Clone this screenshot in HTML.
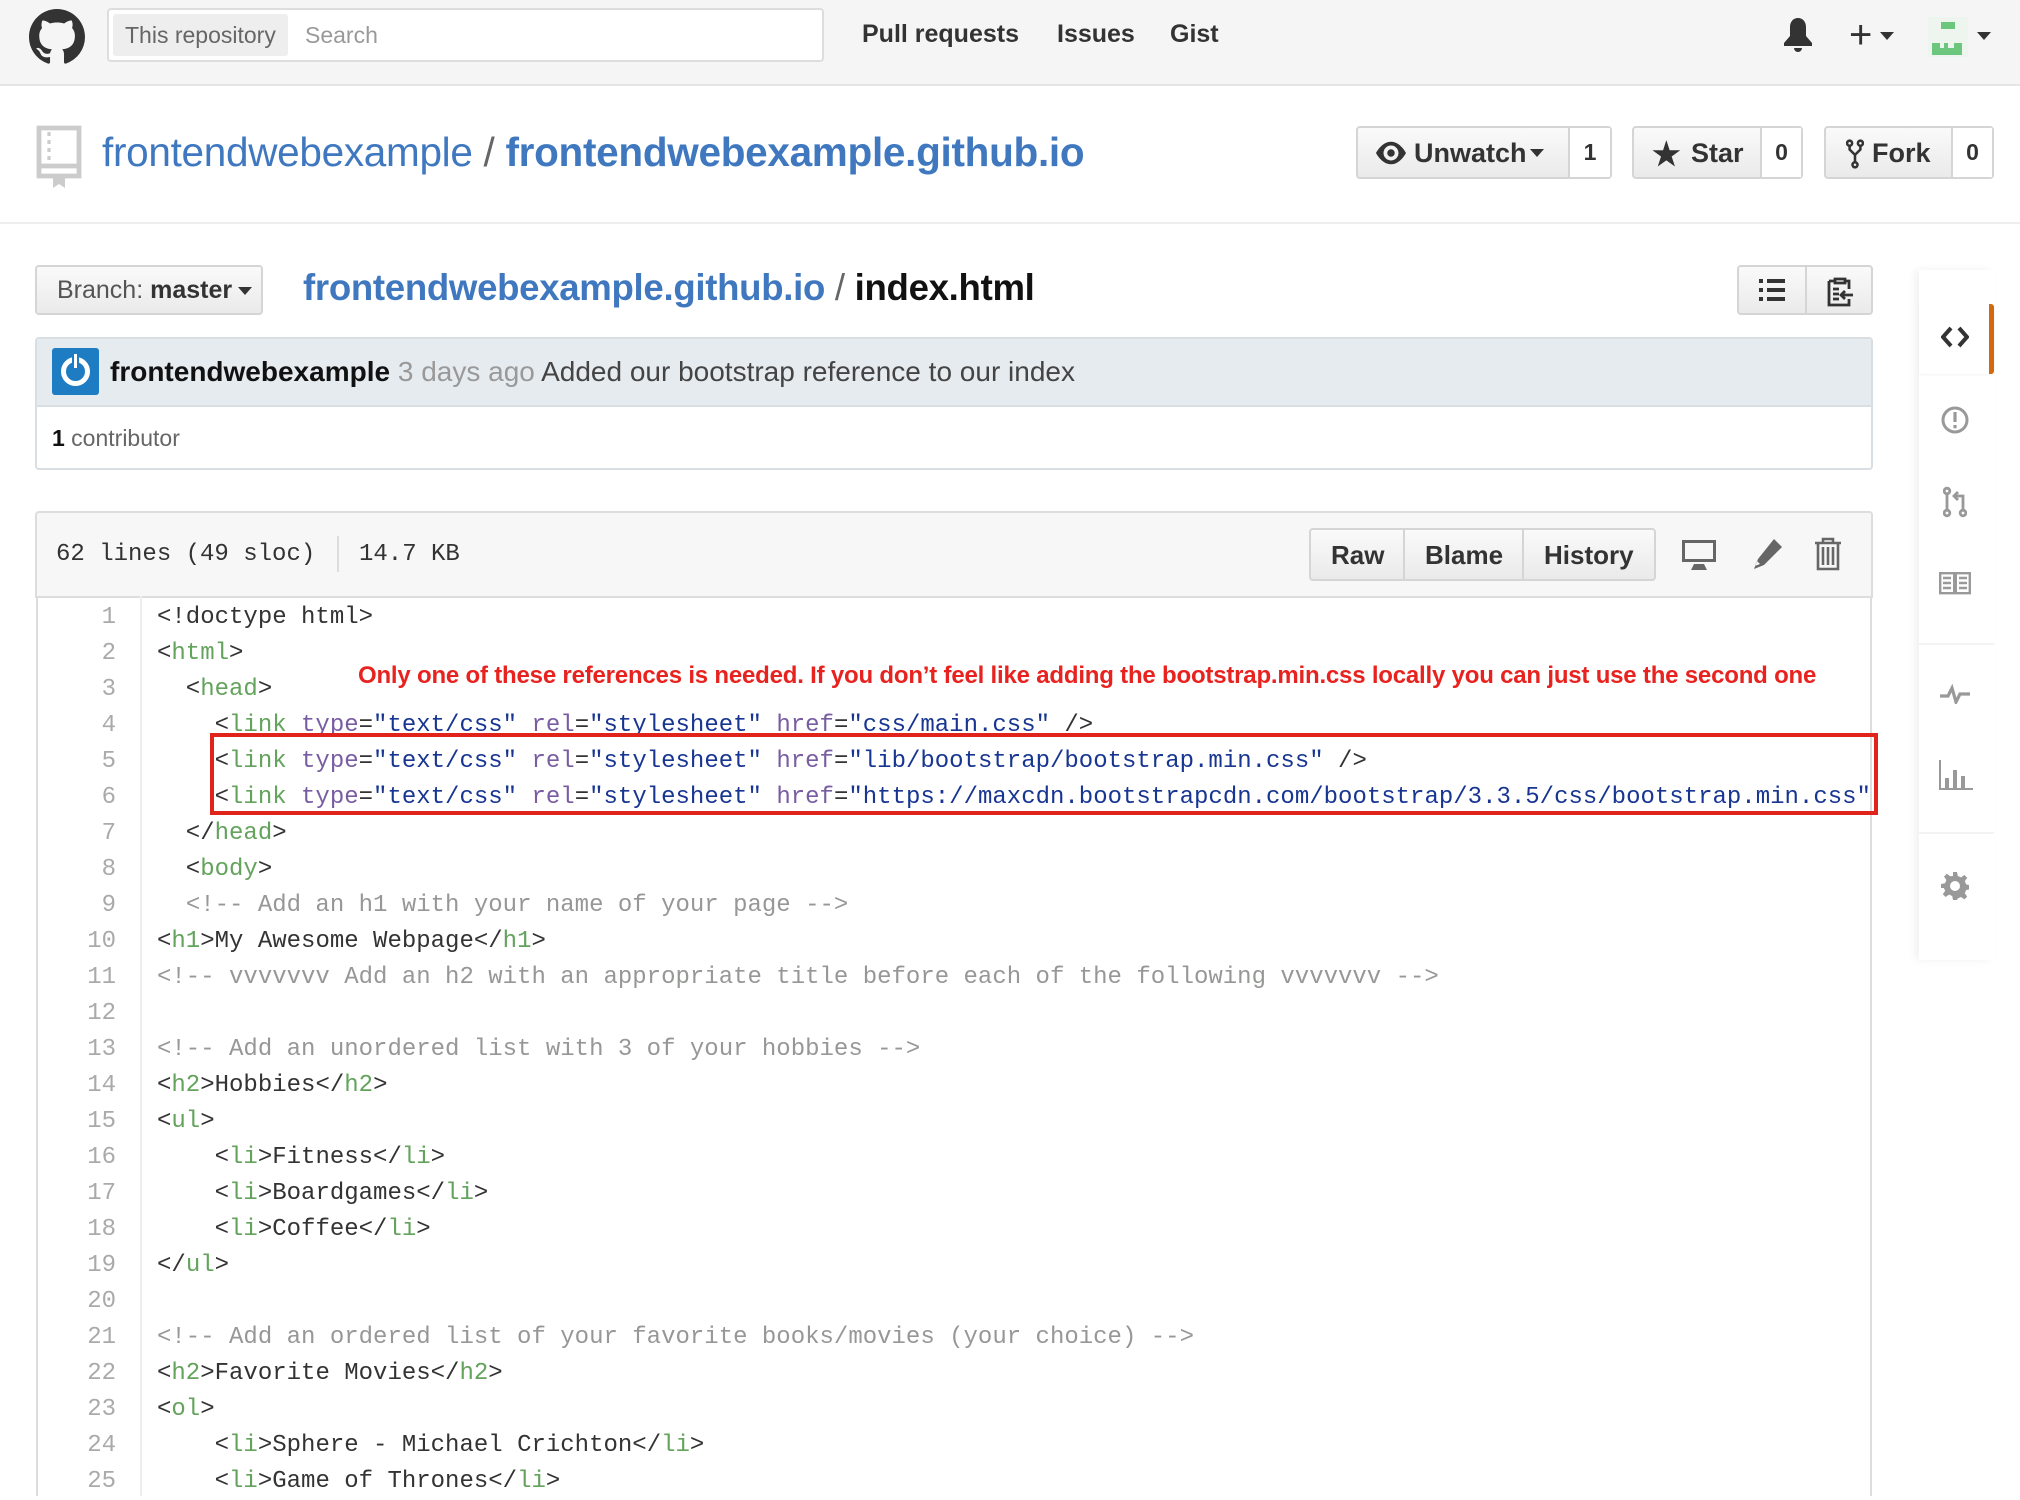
<!DOCTYPE html>
<html><head><meta charset="utf-8">
<style>
*{box-sizing:border-box;margin:0;padding:0}
body{width:2020px;height:1480px;overflow:hidden;background:#fff;font-family:"Liberation Sans",Arial,sans-serif;position:relative;color:#333}
.abs{position:absolute}
.hdr{left:0;top:0;width:2020px;height:86px;background:#f5f5f5;border-bottom:2px solid #e5e5e5}
.search{left:107px;top:8px;width:717px;height:54px;border:2px solid #ddd;border-radius:4px;background:#fff}
.scope{left:4px;top:4px;width:175px;height:42px;background:#eee;border-radius:3px;color:#666;font-size:23px;line-height:42px;padding-left:12px}
.nav{font-size:25px;font-weight:bold;color:#333;top:20px}
.btn{border:2px solid #d5d5d5;border-radius:4px;background:linear-gradient(#fafafa,#eaeaea);font-weight:bold;color:#333}
.cnt{background:#fff;border-left:2px solid #d5d5d5}
.blue{color:#4078c0}
.code{left:36px;top:596px;width:1836px;height:900px;border-left:2px solid #ddd;border-right:2px solid #ddd}
.ln{position:absolute;left:16px;width:100px;text-align:right;font-family:"Liberation Mono",monospace;font-size:24px;color:#aaa;line-height:36px}
.cl{position:absolute;left:157px;font-family:"Liberation Mono",monospace;font-size:24px;color:#333;white-space:pre;line-height:36px}
.t{color:#63a35c}.a{color:#795da3}.s{color:#183691}.c{color:#969896}
.side{left:1919px;top:270px;width:75px;height:690px;background:#fff;box-shadow:-4px 0 8px rgba(0,0,0,0.06)}
</style></head><body>
<div class="abs hdr"></div>
<svg class="abs" style="left:28px;top:9px" width="58" height="56" viewBox="0 0 16 16"><path fill="#333" d="M8 0C3.58 0 0 3.58 0 8c0 3.54 2.29 6.53 5.47 7.59.4.07.55-.17.55-.38 0-.19-.01-.82-.01-1.49-2.01.37-2.53-.49-2.69-.94-.09-.23-.48-.94-.82-1.13-.28-.15-.68-.52-.01-.53.63-.01 1.08.58 1.23.82.72 1.21 1.87.87 2.33.66.07-.52.28-.87.51-1.07-1.78-.2-3.64-.89-3.64-3.95 0-.87.31-1.59.82-2.15-.08-.2-.36-1.02.08-2.12 0 0 .67-.21 2.2.82.64-.18 1.32-.27 2-.27.68 0 1.36.09 2 .27 1.53-1.04 2.2-.82 2.2-.82.44 1.1.16 1.92.08 2.12.51.56.82 1.27.82 2.15 0 3.07-1.87 3.75-3.65 3.95.29.25.54.73.54 1.48 0 1.07-.01 1.93-.01 2.2 0 .21.15.46.55.38A8.013 8.013 0 0016 8c0-4.42-3.58-8-8-8z"/></svg>
<div class="abs search"><div class="abs scope">This repository</div><div class="abs" style="left:196px;top:4px;line-height:42px;font-size:23px;color:#999">Search</div></div>
<div class="abs nav" style="left:862px">Pull requests</div>
<div class="abs nav" style="left:1057px">Issues</div>
<div class="abs nav" style="left:1170px">Gist</div>
<svg class="abs" style="left:1784px;top:18px" width="28" height="34" viewBox="0 0 14 17"><path fill="#333" d="M7 0C4.5 0 3 2 3 4.5V9L0 12.5V14h14v-1.5L11 9V4.5C11 2 9.5 0 7 0zM5 15h4a2 2 0 01-4 0z"/></svg>
<div class="abs" style="left:1849px;top:10px;font-size:40px;color:#333;line-height:50px">+</div>
<div class="abs" style="left:1880px;top:32px;border:7px solid transparent;border-top:8px solid #333"></div>
<div class="abs" style="left:1928px;top:17px;width:40px;height:40px;background:#eef4ee"></div>
<div class="abs" style="left:1941px;top:22px;width:14px;height:7px;background:#6cc67e"></div>
<div class="abs" style="left:1932px;top:43px;width:30px;height:12px;background:#6cc67e"></div>
<div class="abs" style="left:1940px;top:43px;width:4px;height:5px;background:#eef4ee"></div>
<div class="abs" style="left:1948px;top:36px;width:6px;height:12px;background:#eef4ee"></div>
<div class="abs" style="left:1977px;top:32px;border:7px solid transparent;border-top:8px solid #333"></div>

<div class="abs" style="left:0;top:222px;width:2020px;height:2px;background:#eee"></div>
<svg class="abs" style="left:35px;top:124px" width="48" height="64" viewBox="0 0 24 32"><path fill="none" stroke="#ccc" stroke-width="2.4" d="M2 2h20v24H2zM2 21h20"/><path stroke="#ccc" stroke-width="1.6" stroke-dasharray="2 2" d="M7 4v15"/><path fill="#ccc" d="M9 25h6v7l-3-2-3 2z"/></svg>
<div class="abs blue" style="left:102px;top:129px;font-size:40.5px;letter-spacing:-0.3px">frontendwebexample <span style="color:#666">/</span> <b>frontendwebexample.github.io</b></div>

<div class="abs btn" style="left:1356px;top:126px;width:256px;height:53px">
<svg class="abs" style="left:18px;top:13px" width="30" height="24" viewBox="0 0 16 12"><path fill="#333" d="M8 0C3 0 0 6 0 6s3 6 8 6 8-6 8-6-3-6-8-6zm0 10a4 4 0 110-8 4 4 0 010 8zm0-6a2 2 0 100 4 2 2 0 000-4z"/></svg>
<div class="abs" style="left:56px;top:10px;font-size:27px">Unwatch</div>
<div class="abs" style="left:172px;top:21px;border:7px solid transparent;border-top:8px solid #333"></div>
<div class="abs cnt" style="left:210px;top:0;width:42px;height:49px;font-size:23px;text-align:center;line-height:49px">1</div></div>
<div class="abs btn" style="left:1632px;top:126px;width:171px;height:53px">
<div class="abs" style="left:18px;top:7px;font-size:32px">★</div>
<div class="abs" style="left:57px;top:10px;font-size:27px">Star</div>
<div class="abs cnt" style="left:126px;top:0;width:41px;height:49px;font-size:23px;text-align:center;line-height:49px">0</div></div>
<div class="abs btn" style="left:1824px;top:126px;width:170px;height:53px">
<svg class="abs" style="left:20px;top:10px" width="18" height="32" viewBox="0 0 10 16"><g fill="none" stroke="#333" stroke-width="1.4"><circle cx="2" cy="2" r="1.4"/><circle cx="8" cy="2" r="1.4"/><circle cx="5" cy="14" r="1.4"/><path d="M2 3.5v2l3 3 3-3v-2M5 8.5v4"/></g></svg>
<div class="abs" style="left:46px;top:10px;font-size:27px">Fork</div>
<div class="abs cnt" style="left:125px;top:0;width:41px;height:49px;font-size:23px;text-align:center;line-height:49px">0</div></div>

<div class="abs btn" style="left:35px;top:265px;width:228px;height:50px;font-weight:normal;font-size:25px;line-height:46px;padding-left:20px;color:#555">Branch: <b style="color:#333">master</b></div>
<div class="abs" style="left:238px;top:287px;border:7px solid transparent;border-top:8px solid #333"></div>
<div class="abs blue" style="left:303px;top:267px;font-size:36.6px;font-weight:bold;letter-spacing:-0.3px">frontendwebexample.github.io <span style="color:#666;font-weight:normal">/</span> <span style="color:#111">index.html</span></div>
<div class="abs btn" style="left:1737px;top:265px;width:136px;height:50px">
<div class="abs" style="left:66px;top:0;width:2px;height:46px;background:#d5d5d5"></div>
<svg class="abs" style="left:20px;top:12px" width="26" height="22" viewBox="0 0 13 11"><path fill="#333" d="M0 0h2v2H0zM4 0h9v2H4zM0 4.5h2v2H0zM4 4.5h9v2H4zM0 9h2v2H0zM4 9h9v2H4z"/></svg>
<svg class="abs" style="left:86px;top:8px" width="30" height="32" viewBox="0 0 15 16"><path fill="none" stroke="#333" stroke-width="1.4" d="M2 3h3M10 3h2v4M12 12v3H2V3M5 2h5v2H5zM4 7h3M4 9.5h3M4 12h3M8 10h6M10 8l-2 2 2 2"/></svg>
</div>

<div class="abs" style="left:35px;top:337px;width:1838px;height:133px;border:2px solid #d8dee2;border-radius:4px"></div>
<div class="abs" style="left:37px;top:339px;width:1834px;height:68px;background:#e6ebef;border-bottom:2px solid #d8dee2"></div>
<div class="abs" style="left:52px;top:348px;width:47px;height:47px;background:#1e7cc2;border-radius:3px"></div>
<div class="abs" style="left:61px;top:357px;width:29px;height:29px;border:5px solid #fff;border-radius:50%"></div>
<div class="abs" style="left:72px;top:352px;width:7px;height:18px;background:#fff;border:2px solid #1e7cc2"></div>
<div class="abs" style="left:110px;top:356px;font-size:28px;color:#444"><b style="color:#111">frontendwebexample</b> <span style="color:#999">3 days ago</span> Added our bootstrap reference to our index</div>
<div class="abs" style="left:52px;top:425px;font-size:23px;color:#666"><b style="color:#111">1</b> contributor</div>

<div class="abs" style="left:35px;top:511px;width:1838px;height:87px;background:#f7f7f7;border:2px solid #ddd;border-radius:4px 4px 0 0"></div>
<div class="abs" style="left:56px;top:541px;font-family:'Liberation Mono',monospace;font-size:24px;color:#333">62 lines (49 sloc)</div>
<div class="abs" style="left:337px;top:536px;width:2px;height:36px;background:#ddd"></div>
<div class="abs" style="left:359px;top:541px;font-family:'Liberation Mono',monospace;font-size:24px;color:#333">14.7 KB</div>
<div class="abs btn" style="left:1309px;top:528px;width:347px;height:53px;font-size:26px">
<span class="abs" style="left:20px;top:10px">Raw</span>
<div class="abs" style="left:92px;top:0;width:2px;height:49px;background:#d5d5d5"></div>
<span class="abs" style="left:114px;top:10px">Blame</span>
<div class="abs" style="left:211px;top:0;width:2px;height:49px;background:#d5d5d5"></div>
<span class="abs" style="left:233px;top:10px">History</span></div>
<svg class="abs" style="left:1682px;top:540px" width="34" height="30" viewBox="0 0 17 15"><path fill="#666" d="M0 0h17v11H0zM1.5 1.5v8h14v-8zM6 12h5l1.5 3h-8z"/></svg>
<svg class="abs" style="left:1752px;top:539px" width="30" height="30" viewBox="0 0 15 15"><path fill="#666" d="M11 0l4 4-9 9-5 2 2-5zM2.5 11l-1 2.5 2.5-1z"/></svg>
<svg class="abs" style="left:1815px;top:537px" width="26" height="34" viewBox="0 0 13 17"><path fill="none" stroke="#666" stroke-width="1.3" d="M0 3h13M4 3V1h5v2M1.5 3v13h10V3M4 5v9M6.5 5v9M9 5v9"/></svg>

<div class="abs code">
<div class="abs" style="left:102px;top:0;width:2px;height:900px;background:#eee"></div>
</div>
<div class="abs" style="left:0;top:596px;width:2020px;height:900px">
<div class="ln" style="top:4px">1<br>2<br>3<br>4<br>5<br>6<br>7<br>8<br>9<br>10<br>11<br>12<br>13<br>14<br>15<br>16<br>17<br>18<br>19<br>20<br>21<br>22<br>23<br>24<br>25</div>
<div class="cl" style="top:4px">&lt;!doctype html&gt;
&lt;<span class="t">html</span>&gt;
  &lt;<span class="t">head</span>&gt;
    &lt;<span class="t">link</span> <span class="a">type</span>=<span class="s">"text/css"</span> <span class="a">rel</span>=<span class="s">"stylesheet"</span> <span class="a">href</span>=<span class="s">"css/main.css"</span> /&gt;
    &lt;<span class="t">link</span> <span class="a">type</span>=<span class="s">"text/css"</span> <span class="a">rel</span>=<span class="s">"stylesheet"</span> <span class="a">href</span>=<span class="s">"lib/bootstrap/bootstrap.min.css"</span> /&gt;
    &lt;<span class="t">link</span> <span class="a">type</span>=<span class="s">"text/css"</span> <span class="a">rel</span>=<span class="s">"stylesheet"</span> <span class="a">href</span>=<span class="s">"https://maxcdn.bootstrapcdn.com/bootstrap/3.3.5/css/bootstrap.min.css"</span>
  &lt;/<span class="t">head</span>&gt;
  &lt;<span class="t">body</span>&gt;
  <span class="c">&lt;!-- Add an h1 with your name of your page --&gt;</span>
&lt;<span class="t">h1</span>&gt;My Awesome Webpage&lt;/<span class="t">h1</span>&gt;
<span class="c">&lt;!-- vvvvvvv Add an h2 with an appropriate title before each of the following vvvvvvv --&gt;</span>

<span class="c">&lt;!-- Add an unordered list with 3 of your hobbies --&gt;</span>
&lt;<span class="t">h2</span>&gt;Hobbies&lt;/<span class="t">h2</span>&gt;
&lt;<span class="t">ul</span>&gt;
    &lt;<span class="t">li</span>&gt;Fitness&lt;/<span class="t">li</span>&gt;
    &lt;<span class="t">li</span>&gt;Boardgames&lt;/<span class="t">li</span>&gt;
    &lt;<span class="t">li</span>&gt;Coffee&lt;/<span class="t">li</span>&gt;
&lt;/<span class="t">ul</span>&gt;

<span class="c">&lt;!-- Add an ordered list of your favorite books/movies (your choice) --&gt;</span>
&lt;<span class="t">h2</span>&gt;Favorite Movies&lt;/<span class="t">h2</span>&gt;
&lt;<span class="t">ol</span>&gt;
    &lt;<span class="t">li</span>&gt;Sphere - Michael Crichton&lt;/<span class="t">li</span>&gt;
    &lt;<span class="t">li</span>&gt;Game of Thrones&lt;/<span class="t">li</span>&gt;</div>
</div>
<div class="abs" style="left:358px;top:662px;width:1500px;background:#fff;font-size:24px;font-weight:bold;color:#e8231f;white-space:nowrap;letter-spacing:-0.2px">Only one of these references is needed. If you don’t feel like adding the bootstrap.min.css locally you can just use the second one</div>
<div class="abs" style="left:210px;top:733px;width:1668px;height:82px;border:4px solid #e0241c"></div>

<div class="abs side"></div>
<div class="abs" style="left:1919px;top:304px;width:75px;height:70px;background:#fff;border-right:5px solid #d26911;border-radius:0 3px 3px 0;box-shadow:0 1px 2px rgba(0,0,0,.05)"></div>
<svg class="abs" style="left:1941px;top:326px" width="28" height="22" viewBox="0 0 14 11"><path fill="none" stroke="#333" stroke-width="2" d="M5 1L1 5.5 5 10M9 1l4 4.5L9 10"/></svg>
<svg class="abs" style="left:1941px;top:406px" width="28" height="28" viewBox="0 0 14 14"><circle cx="7" cy="7" r="6" fill="none" stroke="#999" stroke-width="1.5"/><path fill="#999" d="M6.2 3h1.6v5H6.2zM6.2 9.5h1.6v1.6H6.2z"/></svg>
<svg class="abs" style="left:1943px;top:486px" width="24" height="32" viewBox="0 0 12 16"><g fill="none" stroke="#999" stroke-width="1.4"><circle cx="2" cy="2.5" r="1.4"/><circle cx="2" cy="13.5" r="1.4"/><circle cx="10" cy="13.5" r="1.4"/><path d="M2 4v8M10 12V5H6M7.5 3L5.5 5l2 2"/></g></svg>
<svg class="abs" style="left:1939px;top:572px" width="32" height="24" viewBox="0 0 16 12"><path fill="none" stroke="#999" stroke-width="1.2" d="M.6.6h7v10h-7zM8.4.6h7v10h-7zM2 3h4M2 5.5h4M2 8h4M10 3h4M10 5.5h4M10 8h4"/></svg>
<div class="abs" style="left:1919px;top:643px;width:75px;height:2px;background:#f3f3f3"></div>
<svg class="abs" style="left:1940px;top:684px" width="30" height="20" viewBox="0 0 15 10"><path fill="none" stroke="#999" stroke-width="1.6" d="M0 6h4l2-4 2 7 2-4h5"/></svg>
<svg class="abs" style="left:1939px;top:760px" width="34" height="30" viewBox="0 0 17 15"><path fill="#999" d="M0 0h1v14h16v1H0zM3 9h2v5H3zM7 5h2v9H7zM11 8h2v6h-2z"/></svg>
<div class="abs" style="left:1919px;top:832px;width:75px;height:2px;background:#f3f3f3"></div>
<svg class="abs" style="left:1941px;top:872px" width="28" height="28" viewBox="0 0 14 14"><path fill="#999" d="M6 0h2l.4 2 1.6.7 1.7-1.2 1.4 1.4-1.2 1.7.7 1.6 2 .4v2l-2 .4-.7 1.6 1.2 1.7-1.4 1.4-1.7-1.2-1.6.7L8 14H6l-.4-2-1.6-.7-1.7 1.2-1.4-1.4 1.2-1.7L1.4 8 0 8V6l2-.4.7-1.6-1.2-1.7 1.4-1.4 1.7 1.2L6 2zM7 4.5a2.5 2.5 0 100 5 2.5 2.5 0 000-5z"/></svg>
</body></html>
